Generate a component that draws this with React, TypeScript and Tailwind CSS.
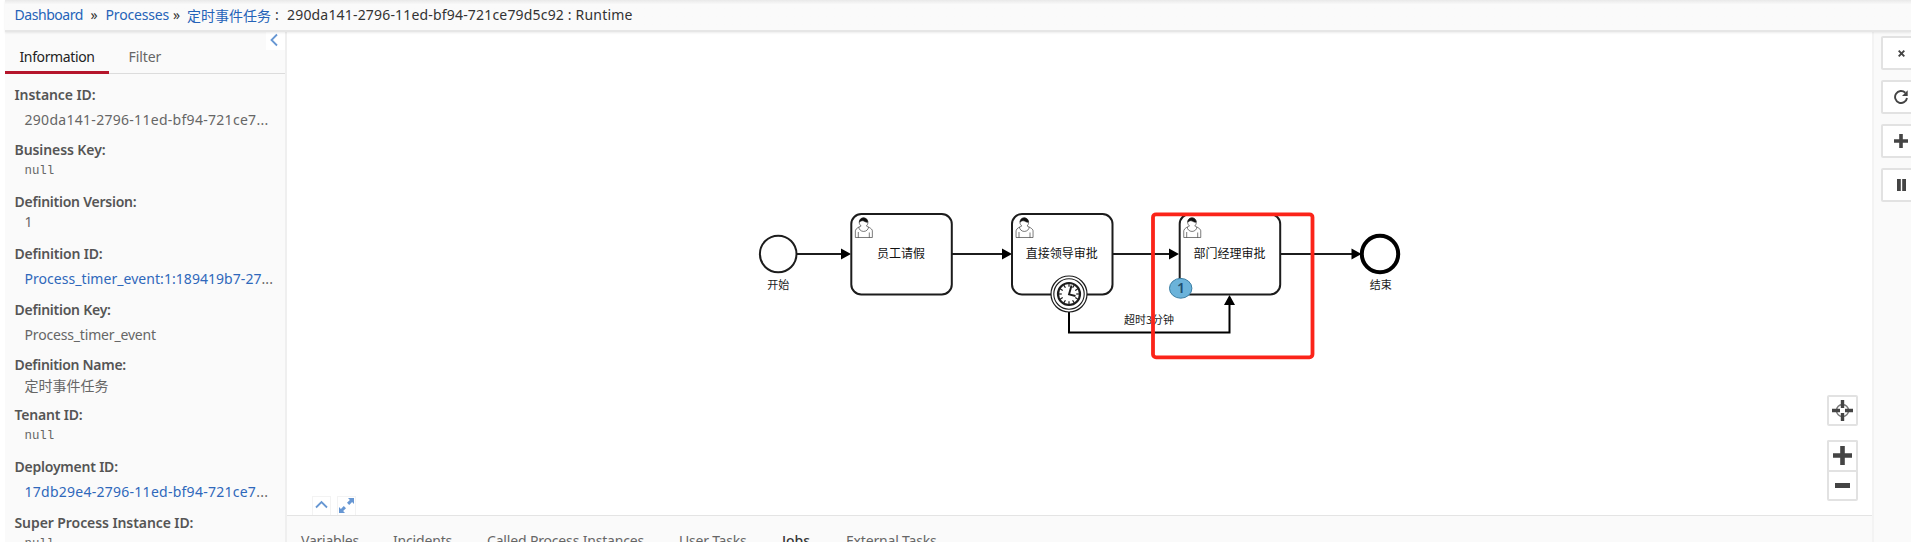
import type { ReactNode } from 'react';

type Row = {
  label: string;
  labelClass: string;
  value: string;
  valueClass: string;
  height: string;
  labelHeight: string;
  link?: boolean;
};

const NULL_CLASS = "font-['Liberation_Mono',monospace] text-[12.4px] leading-[23px] text-[#8c8c8c]";

const rows: Row[] = [
  { label: 'Instance ID:', labelClass: 'tracking-[-0.08px]', value: '290da141-2796-11ed-bf94-721ce7...', valueClass: 'tracking-[0.29px]', height: 'h-[55px]', labelHeight: 'h-[25px]' },
  { label: 'Business Key:', labelClass: 'tracking-[-0.08px]', value: 'null', valueClass: NULL_CLASS, height: 'h-[52px]', labelHeight: 'h-5' },
  { label: 'Definition Version:', labelClass: 'tracking-[-0.24px]', value: '1', valueClass: '', height: 'h-[52px]', labelHeight: 'h-5' },
  { label: 'Definition ID:', labelClass: 'tracking-[-0.19px]', value: 'Process_timer_event:1:189419b7-27', valueClass: 'tracking-[0.05px]', height: 'h-14', labelHeight: 'h-[25px]', link: true },
  { label: 'Definition Key:', labelClass: 'tracking-[-0.24px]', value: 'Process_timer_event', valueClass: 'tracking-[-0.17px]', height: 'h-[55px]', labelHeight: 'h-[25px]' },
  { label: 'Definition Name:', labelClass: 'tracking-[-0.3px]', value: '定时事件任务', valueClass: "font-['Noto_Sans_CJK_SC',sans-serif]", height: 'h-[50px]', labelHeight: 'h-5' },
  { label: 'Tenant ID:', labelClass: 'tracking-[-0.18px]', value: 'null', valueClass: NULL_CLASS, height: 'h-[52px]', labelHeight: 'h-5' },
  { label: 'Deployment ID:', labelClass: 'tracking-[-0.22px]', value: '17db29e4-2796-11ed-bf94-721ce7', valueClass: 'tracking-[0.26px]', height: 'h-14', labelHeight: 'h-[25px]', link: true },
  { label: 'Super Process Instance ID:', labelClass: 'tracking-[-0.08px]', value: 'null', valueClass: NULL_CLASS, height: 'h-[52px]', labelHeight: 'h-5' },
];

const tabs = [
  { name: 'Variables', cls: 'w-[92px] tracking-[-0.23px]' },
  { name: 'Incidents', cls: 'w-[94px] tracking-[-0.18px]' },
  { name: 'Called Process Instances', cls: 'w-48 tracking-[-0.17px]' },
  { name: 'User Tasks', cls: 'w-[103px] tracking-[-0.22px]' },
  { name: 'Jobs', cls: 'w-16 text-[#333] font-medium' },
  { name: 'External Tasks', cls: 'tracking-[-0.18px]' },
];

function Header() {
  return (
    <header className="relative z-10 ml-[5px] flex h-8 shrink-0 items-start whitespace-pre border-b-2 border-[#e6e6e6] bg-linear-to-b from-[#e9e9e9] via-[#fafafa] via-15% to-[#fafafa] pl-[9.5px] pt-[5px] text-sm leading-5 text-[#333] shadow-[0_1px_2px_rgba(0,0,0,0.08)]">
      <a className="w-[76px] tracking-[-0.45px] text-[#2563b8]">Dashboard</a>
      <span className="w-[15px]">»</span>
      <a className="w-[67.5px] tracking-[-0.17px] text-[#2563b8]">Processes</a>
      <span className="w-[14px]">»</span>
      <a className="w-[88px] font-['Noto_Sans_CJK_SC',sans-serif] text-[#2563b8]">定时事件任务</a>
      <span className="w-[12px]">:</span>
      <span className="tracking-[0.18px]">290da141-2796-11ed-bf94-721ce79d5c92 : Runtime</span>
    </header>
  );
}

function Sidebar() {
  return (
    <aside className="relative ml-[5px] w-[282px] shrink-0 overflow-hidden border-r-2 border-[#efefef] bg-[#fafafa] text-sm leading-5">
      <div className="flex h-[42px] border-b border-[#dcdcdc] pt-[15px]">
        <span className="-mb-px w-[104px] border-b-[3px] border-[#b5152b] pl-[14.5px] tracking-[-0.38px] text-[#222]">Information</span>
        <span className="pl-[19.5px] tracking-[-0.1px] text-[#666]">Filter</span>
      </div>
      <button className="absolute right-0 top-0 flex h-[18px] w-[19px] items-center justify-center bg-white pb-[2px] pr-[3px]">
        <svg width="10" height="14" viewBox="0 0 10 14" fill="none" stroke="#6797d3" strokeWidth="1.8"><path d="M8 1.5 2.5 7 8 12.5" /></svg>
      </button>
      <dl className="pt-[11px] pl-[9.5px]">
        {rows.map((r) => (
          <div key={r.label} className={r.height}>
            <dt className={`${r.labelHeight} whitespace-nowrap font-semibold text-[#555] ${r.labelClass}`}>{r.label}</dt>
            <dd className={`h-5 whitespace-nowrap pl-[10px] ${r.link ? 'text-[#2f68bb]' : 'text-[#666]'} ${r.valueClass}`}>
              {r.value}
              {r.link && <span className="text-[#666]">...</span>}
            </dd>
          </div>
        ))}
      </dl>
    </aside>
  );
}

function UserTask({ x, name }: { x: number; name: string }) {
  return (
    <g transform={`translate(${x} 214)`}>
      <rect width="100.5" height="80.5" rx="10" fill="#fff" stroke="#1c1c1c" strokeWidth="2" />
      <g strokeWidth="0.6" stroke="#222" fill="#fff">
        <path d="m15,12c.909,-.845 1.594,-2.049 1.594,-3.385 0,-2.554 -1.805,-4.622 -4.357,-4.622 -2.552,0 -4.288,2.068 -4.288,4.622 0,1.348 .974,2.562 1.896,3.405 -.529,.187 -5.669,2.097 -5.794,4.756v6.718h17v-6.718c0,-2.298 -5.528,-4.595 -6.051,-4.776zm-8,6l0,5.5m11,0l0,-5" />
        <path fill="none" d="m15,12m2.162,1.009c0,2.447 -2.158,4.431 -4.821,4.431 -2.665,0 -4.822,-1.981 -4.822,-4.431" />
        <path fill="#111" d="m15,12m-6.9,-3.8c0,0 2.25,-2.358 4.274,-1.177 2.024,1.181 4.221,1.537 4.124,.965 -.098,-.57 -.117,-3.791 -4.191,-4.136 -3.573,.002 -4.283,3.24 -4.207,4.348z" />
      </g>
      <text x="49.7" y="44.3" fontSize="12" textAnchor="middle" fill="#111">{name}</text>
    </g>
  );
}

function Diagram() {
  const ticks = Array.from({ length: 12 }, (_, i) => i * 30);
  return (
    <svg className="block font-['Noto_Sans_CJK_SC',sans-serif]" width="1585" height="483" viewBox="287 32 1585 483">
      <g fill="none" stroke="#1c1c1c" strokeWidth="2">
        <path d="M797 254H842M952 254H1003M1112 254H1170M1280 254H1353" />
        <path d="M1069 312V332.4H1229.5V304" stroke="#000" />
      </g>
      <g fill="#000">
        <path d="M851 254l-10-5.5v11zM1012 254l-10-5.5v11zM1179 254l-10-5.5v11zM1361.5 254l-10-5.5v11zM1229.5 295l-5.5 10h11z" />
      </g>
      <circle cx="778.2" cy="254" r="18.3" fill="#fff" stroke="#1c1c1c" strokeWidth="2" />
      <circle cx="1380" cy="254" r="18.2" fill="#fff" stroke="#000" strokeWidth="4" />
      <UserTask x={851.3} name="员工请假" />
      <UserTask x={1012} name="直接领导审批" />
      <UserTask x={1179.7} name="部门经理审批" />
      <g transform="translate(1069 294)" stroke="#1c1c1c" fill="#fff">
        <circle r="18" strokeWidth="1.2" />
        <circle r="15.2" strokeWidth="1.1" />
        <circle r="11" strokeWidth="2.2" />
        {ticks.map((a) => (
          <path key={a} d="M0-10V-7.2" strokeWidth="1.2" transform={`rotate(${a})`} />
        ))}
        <path d="M2.5-8.5 0 .4 6.5 2" fill="none" strokeWidth="1.9" />
      </g>
      <g fontSize="11" textAnchor="middle" fill="#222">
        <text x="778.3" y="289">开始</text>
        <text x="1380.7" y="289">结束</text>
        <text x="1149" y="324">超时3分钟</text>
      </g>
      <ellipse cx="1180.7" cy="288.3" rx="11.2" ry="9.9" fill="#6bb3da" stroke="#397da3" />
      <text x="1181" y="293.3" fontSize="14" fontWeight="600" textAnchor="middle" fill="#1f5070" className="font-['Noto_Sans',sans-serif]">1</text>
      <rect x="1153" y="214.3" width="159.5" height="143" rx="3" fill="none" stroke="#fb2419" strokeWidth="3.8" />
    </svg>
  );
}

function ToolButton({ children, className }: { children: ReactNode; className: string }) {
  return <button className={`flex items-center justify-center border-[#e2e2e2] bg-white text-[#444] ${className}`}>{children}</button>;
}

function Canvas() {
  return (
    <main className="relative h-[483px] overflow-hidden bg-white">
      <Diagram />
      <div className="absolute right-[14px] top-[363px] flex flex-col">
        <ToolButton className="mb-[14px] size-[31px] rounded-xs border-2">
          <svg width="21" height="21" viewBox="0 0 21 21" fill="none" stroke="currentColor">
            <circle cx="10.5" cy="10.5" r="6" strokeWidth="1.5" stroke="#777" />
            <path d="M10.5 0v8M10.5 13v8M0 10.5h8M13 10.5h8" strokeWidth="3.4" />
          </svg>
        </ToolButton>
        <ToolButton className="h-[30px] w-[31px] rounded-t-xs border-2 border-b-0 pb-[2px]">
          <svg width="19" height="19" viewBox="0 0 19 19"><path d="M9.5 0v19M0 9.500h19" stroke="currentColor" strokeWidth="4.6" /></svg>
        </ToolButton>
        <ToolButton className="h-[31px] w-[31px] rounded-b-xs border-2">
          <svg width="15" height="5" viewBox="0 0 15 5"><path d="M0 0h15v5H0z" fill="currentColor" /></svg>
        </ToolButton>
      </div>
      <div className="absolute bottom-0 left-[25px] flex gap-[6px]">
        <button className="flex h-[19px] w-[19px] items-center justify-center border border-b-0 border-[#f3f3f3] bg-white pb-[3px] pr-px">
          <svg width="13" height="9" viewBox="0 0 13 9" fill="none" stroke="#6797d3" strokeWidth="1.8"><path d="M1 7.500 6.500 2 12 7.500" /></svg>
        </button>
        <button className="flex h-[19px] w-[19px] items-center justify-center border border-b-0 border-[#f3f3f3] bg-white pb-[2px] pr-px">
          <svg width="15" height="15" viewBox="0 0 15 15" fill="#6797d3"><path d="M9 0h6v6l-1.900-1.900L10.200 7 8 4.800l2.900-2.900zM0 9l1.900 1.900L4.800 8 7 10.200l-2.900 2.900L6 15H0z" /></svg>
        </button>
      </div>
    </main>
  );
}

function BottomTabs() {
  return (
    <nav className="flex h-[27px] overflow-hidden whitespace-nowrap border-t border-[#e4e4e4] bg-[#fafafa] pl-[14px] pt-[15px] text-sm leading-5 text-[#666]">
      {tabs.map((t) => (
        <span key={t.name} className={`shrink-0 ${t.cls}`}>{t.name}</span>
      ))}
    </nav>
  );
}

function RightRail() {
  const box = 'h-[34px] w-[42px] shrink-0 rounded-xs border-2 pr-[2px]';
  return (
    <aside className="flex w-[39px] shrink-0 flex-col gap-[10px] overflow-hidden border-l-2 border-[#f3f3f3] bg-[#fafafa] pl-[7px] pt-1">
      <ToolButton className={box}>
        <svg width="7" height="7" viewBox="0 0 7 7" stroke="currentColor" strokeWidth="1.9"><path d="m.7.7 5.600 5.600M6.300.7.7 6.300" /></svg>
      </ToolButton>
      <ToolButton className={box}>
        <svg width="14" height="14" viewBox="0 0 14 14" fill="none" stroke="currentColor" strokeWidth="1.9">
          <path d="M11.300 2.700A6 6 0 1 0 13 8" />
          <path d="M13.700.3V6H8z" fill="currentColor" stroke="none" />
        </svg>
      </ToolButton>
      <ToolButton className={box}>
        <svg width="14" height="14" viewBox="0 0 14 14"><path d="M7 0v14M0 7h14" stroke="currentColor" strokeWidth="3.6" /></svg>
      </ToolButton>
      <ToolButton className={box}>
        <svg width="9" height="12" viewBox="0 0 9 12" fill="currentColor"><path d="M0 0h3.800v12H0zM5.200 0H9v12H5.200z" /></svg>
      </ToolButton>
    </aside>
  );
}

export default function App() {
  return (
    <div className="flex h-[542px] flex-col overflow-hidden bg-white font-['Noto_Sans','Noto_Sans_CJK_SC',sans-serif]">
      <Header />
      <div className="flex min-h-0 flex-1">
        <Sidebar />
        <div className="min-w-0 flex-1">
          <Canvas />
          <BottomTabs />
        </div>
        <RightRail />
      </div>
    </div>
  );
}
